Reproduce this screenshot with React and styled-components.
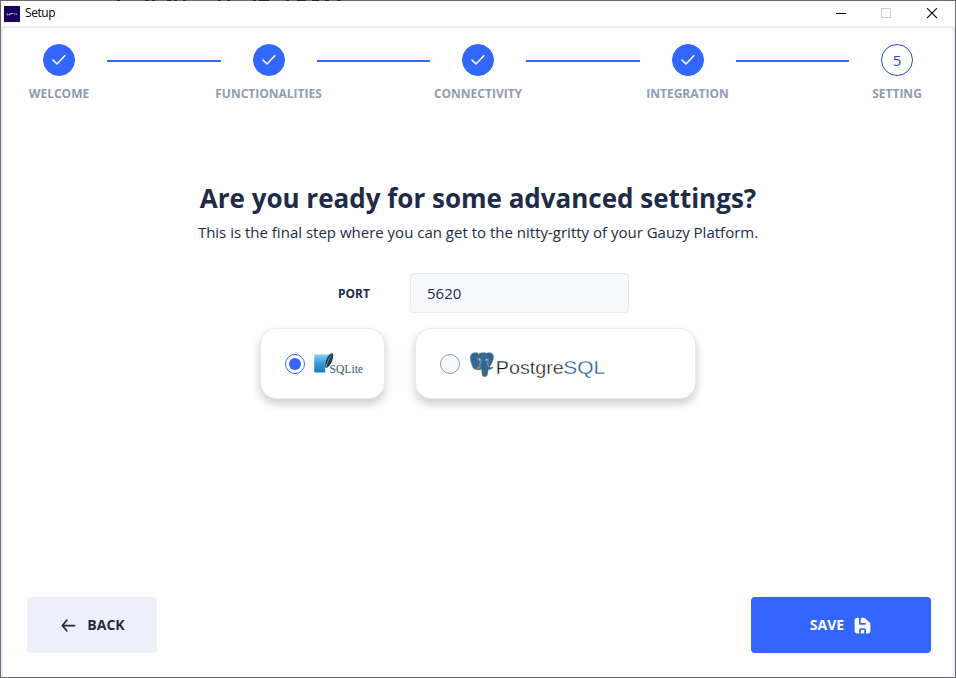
import React, { useState } from "react";
import styled, { createGlobalStyle, css } from "styled-components";

const Global = createGlobalStyle`
  *, *::before, *::after { box-sizing: border-box; }
  html, body { margin: 0; padding: 0; background: #fff; }
  body { font-family: "Open Sans", "Noto Sans", sans-serif; color: #222b45; }
`;

const Window = styled.div`
  display: flex;
  flex-direction: column;
  position: relative;
  width: 956px;
  height: 678px;
  border: 1px solid #6c6a6c;
  background: #fff;
`;

/* Specks of the text behind the window that show through its top edge. */
const EdgeSpecks = styled.svg`
  position: absolute;
  top: -1px;
  left: 114px;
  width: 230px;
  height: 1px;
`;

const TitleBar = styled.header`
  display: flex;
  align-items: center;
  flex: none;
  height: 25px;
  padding-left: 3px;
`;

const AppIcon = styled.svg`
  display: block;
  width: 16px;
  height: 16px;
`;

const WindowTitle = styled.span`
  flex: 1;
  margin: -1px 0 0 5px;
  font-size: 12px;
  line-height: 16px;
  letter-spacing: -0.45px;
  color: #000;
`;

const WindowControls = styled.svg`
  display: block;
  width: 138px;
  height: 25px;
`;

const Frame = styled.div`
  flex: 1;
  display: flex;
  padding: 1px 2px 0;
  background: #e9edf6;
`;

const Card = styled.main`
  flex: 1;
  display: flex;
  flex-direction: column;
  padding: 16px 22px 24px 24px;
  border-top: 1px solid #e4e9f2;
  border-radius: 4px 4px 0 0;
  background: #fff;
`;

const Stepper = styled.nav`
  display: flex;
  align-items: flex-start;
  width: 902px;
`;

const Step = styled.div`
  flex: none;
  width: 64px;
  display: flex;
  flex-direction: column;
  align-items: center;
`;

const StepMark = styled.div`
  display: flex;
  align-items: center;
  justify-content: center;
  width: 32px;
  height: 32px;
  border-radius: 50%;
  border: 1px solid ${(p) => (p.$done ? "#3366ff" : "#274bdb")};
  background: ${(p) => (p.$done ? "#3366ff" : "#fff")};
  color: #274bdb;
  font-size: 15px;
  line-height: 24px;
  font-weight: 400;
`;

const StepLabel = styled.div`
  margin-top: 10px;
  font-size: 12px;
  line-height: 16px;
  font-weight: 700;
  white-space: nowrap;
  color: #8f9bb3;
`;

const Connector = styled.div`
  flex: 1;
  height: 2px;
  margin: 16px 16px 0;
  background: #3366ff;
`;

const Intro = styled.section`
  width: 902px;
  margin-top: 76px;
  text-align: center;
  white-space: nowrap;
`;

const Heading = styled.h1`
  margin: 0;
  font-size: 26px;
  line-height: 40px;
  font-weight: 700;
`;

const Lead = styled.p`
  margin: 2px 0 0;
  font-size: 15px;
  line-height: 24px;
  font-weight: 400;
`;

const PortField = styled.div`
  display: flex;
  align-items: center;
  margin: 29px 0 0 311px;
`;

const PortLabel = styled.label`
  width: 72px;
  padding-top: 2px;
  font-size: 12px;
  line-height: 16px;
  font-weight: 700;
`;

const PortInput = styled.input`
  width: 219px;
  height: 40px;
  padding: 0 16px;
  border: 1px solid #e4e9f2;
  border-radius: 4px;
  outline: none;
  background: #f7f9fc;
  color: #222b45;
  font: 400 15px/24px "Open Sans", sans-serif;
`;

const Databases = styled.div`
  display: flex;
  gap: 30px;
  margin: 15px 0 0 233px;
`;

const DatabaseCard = styled.button`
  display: flex;
  align-items: center;
  gap: ${(p) => p.$gap};
  width: ${(p) => p.$width};
  height: 71px;
  padding: 0 0 0 24px;
  border: 1px solid #e4e9f2;
  border-radius: 16px;
  background: #fff;
  box-shadow: 0 5px 10px rgba(0, 0, 0, 0.2);
`;

const Radio = styled.span`
  flex: none;
  display: flex;
  align-items: center;
  justify-content: center;
  width: 20px;
  height: 20px;
  border: 1px solid #8f9bb3;
  border-radius: 50%;
  background: #f7f8fb;
  ${(p) =>
    p.$checked &&
    css`
      border-color: #3366ff;
      background: #fff;
      &::after {
        content: "";
        width: 12px;
        height: 12px;
        border-radius: 50%;
        background: #3366ff;
      }
    `}
`;

const Logo = styled.svg`
  display: block;
  flex: none;
  margin-top: 2px;
  overflow: visible;
`;

const Actions = styled.footer`
  display: flex;
  justify-content: space-between;
  margin-top: auto;
`;

const ActionButton = styled.button`
  display: flex;
  align-items: center;
  justify-content: center;
  gap: 8px;
  width: ${(p) => (p.$primary ? "180px" : "130px")};
  height: 56px;
  padding: ${(p) => (p.$primary ? "0 0 0 1px" : "0 1px 0 0")};
  border: 0;
  border-radius: 4px;
  background: ${(p) => (p.$primary ? "#3366ff" : "#edf0f8")};
  color: ${(p) => (p.$primary ? "#fff" : "#222b45")};
  font: 700 14px/16px "Open Sans", sans-serif;
`;

const ButtonIcon = styled.svg`
  display: block;
  width: 21px;
  height: 21px;
  fill: currentColor;
`;

const STEPS = ["WELCOME", "FUNCTIONALITIES", "CONNECTIVITY", "INTEGRATION", "SETTING"];

const CheckIcon = () => (
  <svg width="16" height="12" viewBox="0 0 16 12" fill="none" stroke="#fff" strokeWidth="1.5">
    <path d="M1.6 5.6 L6 10 L14.3 1.2" />
  </svg>
);

const SqliteLogo = () => (
  <Logo width="50" height="24" viewBox="0 0 50 24">
    <defs>
      <linearGradient id="sqliteBox" x1="0" y1="0" x2="0" y2="1">
        <stop offset="0" stopColor="#86cbee" />
        <stop offset="0.5" stopColor="#3a9ad6" />
        <stop offset="1" stopColor="#0f7cc4" />
      </linearGradient>
    </defs>
    <path d="M1.3 1.5H15C12 5 10.7 11 11 19.6H1.3Q.2 19.6 .2 18.5V2.6Q.2 1.5 1.3 1.5Z" fill="url(#sqliteBox)" />
    <path d="M18.8.4C16.5-.2 13.5 3 12 7.4C11 10.6 11.1 13 11.4 15.2C14.8 14.3 17 11.5 18.4 7C19.3 4 19.6 1.5 18.8.4Z" fill="#0d4257" />
    <path d="M17.5 2.4C14.5 6 11.6 12 11.3 20.5" stroke="#b6ccd6" strokeWidth=".6" fill="none" />
    <text x="15.5" y="19.7" fontFamily="Liberation Serif, serif" fontSize="12.5" fill="#2f5a70" textLength="33.5" lengthAdjust="spacingAndGlyphs">SQLite</text>
  </Logo>
);

const PostgresLogo = () => (
  <Logo width="136" height="26" viewBox="0 0 136 26">
    <g fill="#336791" stroke="#5c6670" strokeWidth=".5" strokeLinejoin="round">
      <path d="M8 1.2C3.500-.2.300 1.500.400 5.500C.600 9.800 2.300 15.400 4.300 17C5.500 17.800 6.800 16.800 8 15.300L10 12Z" />
      <path d="M16 1.200C20-.2 23.500 1 23.500 4.400C23.500 8 21.300 12.600 19.300 15.200C20.500 15.700 21.900 15.500 23.300 15.100C22.200 17 20.200 17.600 18 17.400C17.900 20 17.700 22 17 23.400C16 25.300 12.800 25.200 12.200 23.100C11.800 21 12 18.600 11.600 16.900C9.700 18 7.500 17.900 6.200 17.200C7.500 16.500 8.300 16.300 8.800 15.300C6.900 13.500 6.400 10 6.900 6.300C7.200 2.800 9.700.6 12.700.8C14.100.8 15 .7 16 1.200Z" />
    </g>
    <path d="M7.400 7.200C9.300 5.900 11.200 6.500 11.100 8.700C11 11 9.100 12 10 14.200C10.400 15.300 9.600 16 8.400 16.600M15.600 7.300C17 6 18.200 6.800 18 9C17.800 11 17.200 12.600 18.600 14.900" fill="none" stroke="#b9cddb" strokeWidth=".6" />
    <circle cx="9.500" cy="7.900" r=".7" fill="#fff" />
    <circle cx="16.100" cy="7.900" r=".7" fill="#fff" />
    <g fontFamily="Liberation Sans, sans-serif" fontSize="18.5">
      <text x="25.8" y="21.500" fill="#111" stroke="#fff" strokeWidth=".35" textLength="68" lengthAdjust="spacingAndGlyphs">Postgre</text>
      <text x="93.3" y="21.500" fill="#1f5f96" stroke="#fff" strokeWidth=".3" textLength="42" lengthAdjust="spacingAndGlyphs">SQL</text>
    </g>
  </Logo>
);

export default function App() {
  const [database, setDatabase] = useState("sqlite");
  const [port, setPort] = useState("5620");

  return (
    <>
      <Global />
      <Window>
        <EdgeSpecks viewBox="0 0 230 1">
          <path d="M2 .5h3M30 .5h4M37 .5h3M52 .5h4M59 .5h3M68 .5h3M103 .5h3M112 .5h3M138 .5h3M144 .5h10M171 .5h3M182 .5h9M197 .5h7M210 .5h4M222 .5h4" stroke="#2b2526" />
        </EdgeSpecks>
        <TitleBar>
          <AppIcon viewBox="0 0 16 16">
            <rect width="16" height="16" fill="#1b005d" />
            <path d="M3 7v2h1V8M5 8v1h1V7M7 9V7l1 1 1-1v1M10 8h1M12 7v1.5h1" fill="none" stroke="#c8c0dc" strokeWidth=".7" />
          </AppIcon>
          <WindowTitle>Setup</WindowTitle>
          <WindowControls viewBox="0 0 138 25" fill="none">
            <path d="M19 12.5h10" stroke="#000" />
            <rect x="64.5" y="7.5" width="9" height="9" stroke="#ccc" />
            <path d="M110 7.2l10 10M120 7.2l-10 10" stroke="#000" strokeWidth="1.1" />
          </WindowControls>
        </TitleBar>
        <Frame>
          <Card>
            <Stepper>
              {STEPS.map((label, i) => {
                const done = i < STEPS.length - 1;
                return (
                  <React.Fragment key={label}>
                    <Step>
                      <StepMark $done={done}>{done ? <CheckIcon /> : i + 1}</StepMark>
                      <StepLabel>{label}</StepLabel>
                    </Step>
                    {done && <Connector />}
                  </React.Fragment>
                );
              })}
            </Stepper>
            <Intro>
              <Heading>Are you ready for some advanced settings?</Heading>
              <Lead>This is the final step where you can get to the nitty-gritty of your Gauzy Platform.</Lead>
            </Intro>
            <PortField>
              <PortLabel htmlFor="port">PORT</PortLabel>
              <PortInput id="port" value={port} onChange={(e) => setPort(e.target.value)} />
            </PortField>
            <Databases>
              <DatabaseCard $width="125px" $gap="9px" onClick={() => setDatabase("sqlite")}>
                <Radio $checked={database === "sqlite"} />
                <SqliteLogo />
              </DatabaseCard>
              <DatabaseCard $width="281px" $gap="10px" onClick={() => setDatabase("postgres")}>
                <Radio $checked={database === "postgres"} />
                <PostgresLogo />
              </DatabaseCard>
            </Databases>
            <Actions>
              <ActionButton>
                <ButtonIcon viewBox="0 0 24 24">
                  <path d="M19 11H7.14l3.63-4.36a1 1 0 1 0-1.54-1.28l-5 6a1.19 1.19 0 0 0-.09.15c0 .05 0 .08-.07.13A1 1 0 0 0 4 12a1 1 0 0 0 .07.36c0 .05 0 .08.07.13a1.19 1.19 0 0 0 .09.15l5 6A1 1 0 0 0 10 19a1 1 0 0 0 .64-.23 1 1 0 0 0 .13-1.41L7.14 13H19a1 1 0 0 0 0-2z" />
                </ButtonIcon>
                BACK
              </ActionButton>
              <ActionButton $primary>
                SAVE
                <ButtonIcon viewBox="0 0 24 24">
                  <path d="M10 17h4v4h-4z" />
                  <path d="M20.12 8.71l-4.83-4.83A3 3 0 0 0 13.17 3H10v6h5a1 1 0 0 1 0 2H9a1 1 0 0 1-1-1V3H6a3 3 0 0 0-3 3v12a3 3 0 0 0 3 3h2v-4a2 2 0 0 1 2-2h4a2 2 0 0 1 2 2v4h2a3 3 0 0 0 3-3v-7.17a3 3 0 0 0-.88-2.12z" />
                </ButtonIcon>
              </ActionButton>
            </Actions>
          </Card>
        </Frame>
      </Window>
    </>
  );
}
